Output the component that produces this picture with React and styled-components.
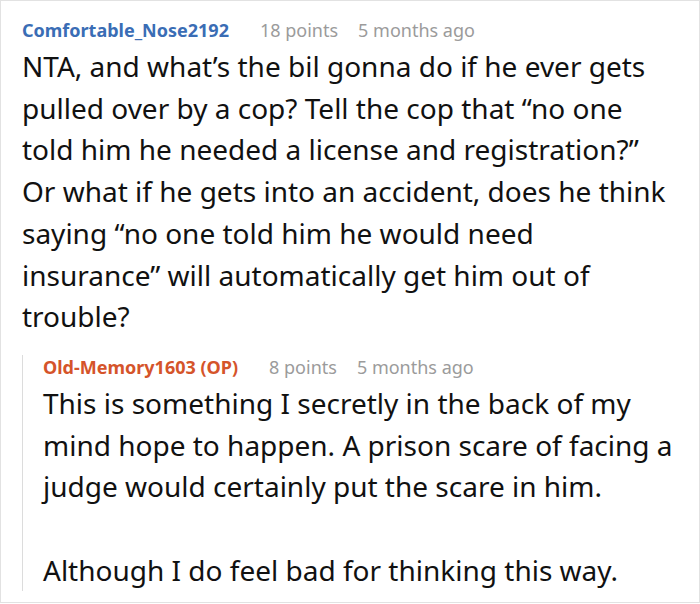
import React from 'react';
import styled, { createGlobalStyle } from 'styled-components';

const GlobalStyle = createGlobalStyle`
  html, body {
    margin: 0;
    padding: 0;
    background: #fff;
  }
  body {
    font-family: 'Noto Sans', 'DejaVu Sans', sans-serif;
  }
`;

const Frame = styled.div`
  box-sizing: border-box;
  width: 700px;
  height: 603px;
  border: 1px solid #e2e2e2;
  padding: 17px 32px 0 21px;
  overflow: hidden;
  background: #fff;
`;

const Header = styled.div`
  display: flex;
  align-items: baseline;
  font-size: 18px;
  line-height: 24px;
  white-space: nowrap;
`;

const Author = styled.span`
  font-weight: 700;
  color: ${(p) => (p.op ? '#d5542a' : '#3a6db5')};
  margin-right: 31px;
`;

const Meta = styled.span`
  color: #9b9b9b;
  margin-right: 20px;
`;

const Body = styled.div`
  font-size: 28px;
  line-height: 41.7px;
  color: #111;
  margin-top: 4px;

  p {
    margin: 0;
  }
  p + p {
    margin-top: 41.7px;
  }
`;

const Reply = styled.div`
  margin: 17px -8px 0 0;
  border-left: 1px solid #dcdcdc;
  padding-left: 20px;
`;

function Comment({ author, op, points, age, children }) {
  return (
    <>
      <Header>
        <Author op={op}>{author}</Author>
        <Meta>{points} points</Meta>
        <Meta>{age}</Meta>
      </Header>
      <Body>{children}</Body>
    </>
  );
}

export default function App() {
  return (
    <>
      <GlobalStyle />
      <Frame>
        <Comment author="Comfortable_Nose2192" points={18} age="5 months ago">
          <p>
            NTA, and what’s the bil gonna do if he ever gets pulled over by a
            cop? Tell the cop that “no one told him he needed a license and
            registration?” Or what if he gets into an accident, does he think
            saying “no one told him he would need insurance” will automatically
            get him out of trouble?
          </p>
        </Comment>
        <Reply>
          <Comment
            author="Old-Memory1603 (OP)"
            op
            points={8}
            age="5 months ago"
          >
            <p>
              This is something I secretly in the back of my mind hope to
              happen. A prison scare of facing a judge would certainly put the
              scare in him.
            </p>
            <p>Although I do feel bad for thinking this way.</p>
          </Comment>
        </Reply>
      </Frame>
    </>
  );
}
